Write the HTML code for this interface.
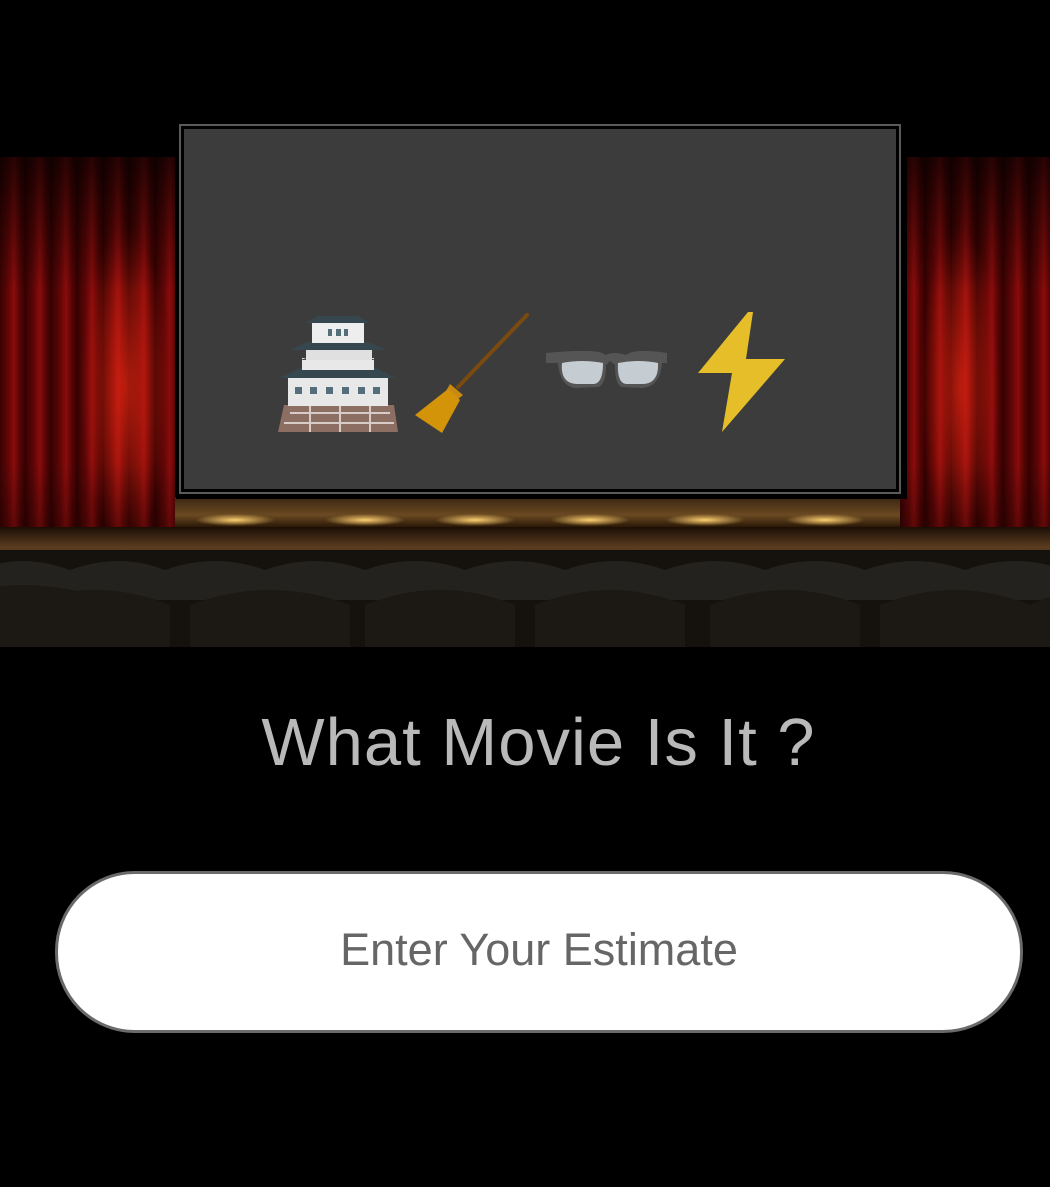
<!DOCTYPE html>
<html><head><meta charset="utf-8"><style>
html,body{margin:0;padding:0;background:#000;width:1050px;height:1187px;overflow:hidden;font-family:"Liberation Sans",sans-serif}
.abs{position:absolute}
.curtain{background:repeating-linear-gradient(90deg,#3a0202 0px,#600606 8px,#8a0c0c 14px,#550404 20px,#300101 26px)}
</style></head><body>
<!-- curtains -->
<div class="abs curtain" style="left:0;top:157px;width:175px;height:383px;border-radius:0 0 6px 0"></div>
<div class="abs" style="left:0;top:157px;width:175px;height:383px;background:radial-gradient(ellipse 45px 160px at 125px 230px,rgba(255,45,20,.6),rgba(0,0,0,0));"></div>
<div class="abs" style="left:0;top:157px;width:175px;height:383px;background:linear-gradient(180deg,rgba(0,0,0,.7),rgba(0,0,0,0) 35%,rgba(0,0,0,0) 80%,rgba(0,0,0,.35))"></div>
<div class="abs curtain" style="left:900px;top:157px;width:150px;height:383px"></div>
<div class="abs" style="left:900px;top:157px;width:150px;height:383px;background:radial-gradient(ellipse 40px 160px at 60px 230px,rgba(255,45,20,.55),rgba(0,0,0,0));"></div>
<div class="abs" style="left:900px;top:157px;width:150px;height:383px;background:linear-gradient(180deg,rgba(0,0,0,.7),rgba(0,0,0,0) 35%,rgba(0,0,0,0) 80%,rgba(0,0,0,.35))"></div>
<!-- stage -->
<div class="abs" style="left:175px;top:497px;width:725px;height:30px;background:linear-gradient(180deg,#3a2410,#6b4a22 60%,#2a1806)"></div>
<div class="abs" style="left:175px;top:512px;width:725px;height:14px;background:radial-gradient(ellipse 40px 6px at 60px 8px,#ffd070,transparent),radial-gradient(ellipse 40px 6px at 190px 8px,#ffd070,transparent),radial-gradient(ellipse 40px 6px at 300px 8px,#ffd070,transparent),radial-gradient(ellipse 40px 6px at 415px 8px,#ffd070,transparent),radial-gradient(ellipse 40px 6px at 530px 8px,#ffd070,transparent),radial-gradient(ellipse 40px 6px at 650px 8px,#ffd070,transparent)"></div>
<div class="abs" style="left:0;top:527px;width:1050px;height:40px;background:linear-gradient(180deg,#1a0e04,#5a3c20 50%,#4a3018)"></div>
<!-- seats -->
<svg class="abs" style="left:0;top:550px" width="1050" height="97" viewBox="0 0 1050 97">
<rect width="1050" height="97" fill="#15110c"/>
<g fill="#24221e">
<path d="M-20 20 q40 -18 90 0 v30 h-90z"/><path d="M70 20 q50 -18 95 0 v30 h-95z"/><path d="M165 20 q50 -18 100 0 v30 h-100z"/><path d="M265 20 q50 -18 100 0 v30 h-100z"/><path d="M365 20 q50 -18 100 0 v30 h-100z"/><path d="M465 20 q50 -18 100 0 v30 h-100z"/><path d="M565 20 q50 -18 100 0 v30 h-100z"/><path d="M665 20 q50 -18 100 0 v30 h-100z"/><path d="M765 20 q50 -18 100 0 v30 h-100z"/><path d="M865 20 q50 -18 100 0 v30 h-100z"/><path d="M965 20 q50 -18 100 0 v30 h-100z"/>
</g>
<g fill="#1c1814">
<path d="M-60 50 q80 -30 170 0 v47 h-170z"/><path d="M20 55 q75 -30 150 0 v42 h-150z"/><path d="M190 55 q80 -30 160 0 v42 h-160z"/><path d="M365 55 q75 -30 150 0 v42 h-150z"/><path d="M535 55 q75 -30 150 0 v42 h-150z"/><path d="M710 55 q75 -30 150 0 v42 h-150z"/><path d="M880 55 q75 -30 150 0 v42 h-150z"/><path d="M1030 55 q40 -20 60 0 v42 h-60z"/>
</g>
</svg>
<!-- screen -->
<div class="abs" style="left:176px;top:122px;width:731px;height:377px;background:#000"></div>
<div class="abs" style="left:179px;top:124px;width:718px;height:366px;border:2px solid #5a5a5a;background:#000"></div>
<div class="abs" style="left:184px;top:129px;width:712px;height:360px;background:#3c3c3c"></div>
<!-- emojis -->
<svg class="abs" style="left:270px;top:305px" width="530" height="135" viewBox="0 0 530 135">
<path d="M14 100 L124 100 L128 127 L8 127Z" fill="#8d6e63"/>
<path d="M20 108 h100 M14 118 h110 M40 100 v27 M70 100 v27 M100 100 v27" stroke="#d7ccc8" stroke-width="2"/>
<rect x="18" y="73" width="100" height="28" fill="#e8e8e8"/>
<g fill="#546e7a"><rect x="25" y="82" width="7" height="7"/><rect x="40" y="82" width="7" height="7"/><rect x="56" y="82" width="7" height="7"/><rect x="72" y="82" width="7" height="7"/><rect x="88" y="82" width="7" height="7"/><rect x="103" y="82" width="7" height="7"/></g>
<path d="M10 73 L30 63 L106 63 L126 73Z" fill="#37474f"/>
<rect x="32" y="53" width="72" height="12" fill="#e8e8e8"/>
<path d="M30 55 L68 43 L106 55Z" fill="#37474f"/>
<rect x="36" y="45" width="66" height="10" fill="#e0e0e0"/>
<path d="M20 45 L38 37 L98 37 L116 45Z" fill="#37474f"/>
<rect x="42" y="18" width="52" height="20" fill="#eee"/>
<g fill="#546e7a"><rect x="58" y="24" width="4" height="7"/><rect x="66" y="24" width="5" height="7"/><rect x="74" y="24" width="4" height="7"/></g>
<path d="M36 18 L48 11 L88 11 L100 18Z" fill="#37474f"/>
<line x1="188" y1="82" x2="257" y2="10" stroke="#7a4a10" stroke-width="4" stroke-linecap="round"/>
<path d="M180 79 L193 90 L187 95 L176 86Z" fill="#c88a10"/>
<path d="M178 84 L190 95 L172 128 L145 110Z" fill="#d4940a"/>
<path d="M276 48 Q330 43 335 50 Q345 46 356 50 Q365 43 397 48 L397 58 L392 58 Q390 82 372 83 L352 82 Q345 80 345 60 L340 56 L336 60 Q336 80 328 82 L306 83 Q290 82 288 58 L276 58Z" fill="#555"/>
<path d="M292 58 Q290 79 308 79 L324 79 Q333 78 333 58 Q312 54 292 58Z" fill="#c5ccd2"/>
<path d="M348 58 Q347 78 356 79 L372 79 Q389 79 388 58 Q368 54 348 58Z" fill="#c5ccd2"/>
<path d="M478 7 L428 68 L462 68 L452 127 L515 54 L476 54 L483 7Z" fill="#e6be2a"/>
</svg>
<!-- title -->
<div class="abs" style="left:0;top:704px;width:1077px;text-align:center;color:#b9b9b9;font-size:67px;font-weight:300;letter-spacing:1px">What Movie Is It ?</div>
<!-- input -->
<div class="abs" style="left:55px;top:871px;width:962px;height:156px;border:3px solid #6a6a6a;border-radius:80px;background:#fff;text-align:center;line-height:152px;color:#666;font-size:45px">Enter Your Estimate</div>
</body></html>
